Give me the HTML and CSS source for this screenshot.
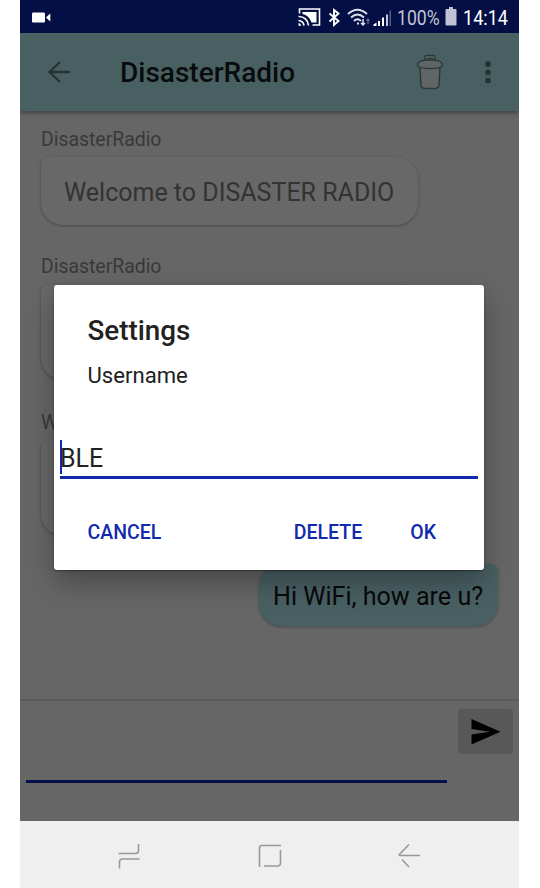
FILE: index.html
```html
<!DOCTYPE html>
<html lang="en">
<head>
<meta charset="utf-8">
<title>DisasterRadio</title>
<link rel="stylesheet" href="styles.css">
</head>
<body>
<div class="phone">
  <div class="status">
    <svg class="camera" width="19" height="12" viewBox="0 0 19 12"><rect y="0.5" width="13" height="10" rx="1.2"/><path d="M14 5.500 15.500 4 18.300 1.500v8L15.500 7z"/></svg>
    <svg class="status-icons" width="98" height="24" viewBox="0 0 98 24">
      <g fill="none" stroke="#fff" stroke-width="1.600"><path d="M1.500 8.500V4h20v16h-7"/><path d="M.5 15.500a6 6 0 0 1 5.500 5M.5 11.500a9.500 9.500 0 0 1 10 9"/></g>
      <path d="M4.500 7h14v10.500h-5Q11 10 4.500 9zM.5 18q2.300.3 2.800 2.800H.5z"/>
      <path d="M31.500 8.500l9 7.500-4.500 4V5l4.500 3.500-9 8" fill="none" stroke="#fff" stroke-width="1.900"/>
      <g fill="none" stroke="#dfe1ea" stroke-width="1.900"><path d="M50 9q9.500-8.500 19 0M53 12.500q6.500-6 13 0M56 16q3.500-3.500 7 0M59 18.500h2"/><path d="M65 14v6m-2-2 2 2 2-2" stroke-width="1.500"/><path d="M70 19v-5m-1.500 2 1.500-2 1.500 2" stroke="#69708f" stroke-width="1.200"/></g>
      <path d="M75.500 19.500l3-2V21h-3z"/><path d="M80 16h2v5h-2zM84 12.500h2V21h-2z"/><path d="M88 9.500h2V21h-2z" fill="#c4c7d6"/><path d="M91.500 5.500H93V21h-1.500z" fill="#555d80"/>
    </svg>
    <span class="percent">100%</span>
    <svg class="battery" width="12" height="20" viewBox="0 0 12 20"><path d="M4 0h4v2h2.500q1 0 1 1v14.500q0 1-1 1h-9q-1 0-1-1V3q0-1 1-1H4z"/></svg>
    <span class="clock">14:14</span>
  </div>
  <header class="toolbar">
    <svg class="back" width="24" height="24" viewBox="0 0 24 24"><path d="M13 2 2.500 12 13 22M2.500 12H23"/></svg>
    <h1>DisasterRadio</h1>
    <svg class="trash" width="26" height="36" viewBox="0 0 26 36"><path d="M8 7V3q0-1.500 1.500-1.500h7Q18 1.500 18 3v4M10.500 6V4.500h5V6"/><path d="M3 13l.8 18Q4 33.700 7 34.200q6 .8 12 0 2.800-.5 3-3L23 13z"/><path d="M1 10q0-4 12-4t12 4v2.500Q22 14.500 13 14.500T1 12.500z"/></svg>
    <svg class="more" width="8" height="26" viewBox="0 0 8 26"><circle cx="4" cy="5" r="2.900"/><circle cx="4" cy="13.300" r="2.900"/><circle cx="4" cy="21.600" r="2.900"/></svg>
  </header>
  <main class="chat">
    <section class="message"><div class="sender">DisasterRadio</div><div class="bubble">Welcome to DISASTER RADIO</div></section>
    <section class="message tall"><div class="sender">DisasterRadio</div><div class="bubble"></div></section>
    <section class="message tall last"><div class="sender">WiFi</div><div class="bubble"></div></section>
    <div class="bubble own">Hi WiFi, how are u?</div>
  </main>
  <footer class="composer">
    <div class="entry"></div>
    <div class="send"><svg width="30" height="26" viewBox="0 0 30 26"><path d="M.5 0 29.500 12.800.5 25.500V15.500L19 12.800.5 10z"/></svg></div>
  </footer>
  <nav class="navbar">
    <svg width="24" height="26" viewBox="0 0 24 26"><path d="M.5 10.500h17q3 0 3-3V1M21.500 16H4.500q-3 0-3 3v6.500"/></svg>
    <svg width="24" height="26" viewBox="0 0 24 26"><path d="M1.500 24V5q0-2.500 2.500-2.500h19M22.500 7v13q0 3-3 3H6"/></svg>
    <svg width="24" height="26" viewBox="0 0 24 26"><path d="M11 1.500 1.500 11.200q-1 1.300.8 1.300H22M4 16.500l7 7.500"/></svg>
  </nav>
  <div class="dialog">
    <h2>Settings</h2>
    <div class="label">Username</div>
    <div class="field"><span class="caret"></span><span class="value">BLE</span></div>
    <div class="actions"><span>CANCEL</span><span class="delete">DELETE</span><span class="ok">OK</span></div>
  </div>
</div>
</body>
</html>
```
FILE: styles.css
```css
* { box-sizing: border-box; }
body { margin: 0; background: #fff; font-family: Roboto, sans-serif; }
h1, h2 { margin: 0; font-weight: 500; }
svg { display: block; flex: none; }
.phone { position: relative; display: flex; flex-direction: column; width: 499px; height: 888px; margin-left: 20px; overflow: hidden; background: #666; }
.status { display: flex; align-items: center; height: 33px; flex: none; padding: 2px 11px 0 0; background: #040f46; color: #fff; fill: #fff; font-size: 20.5px; }
.camera { margin-left: 12px; }
.status-icons { margin-left: auto; margin-right: 1px; margin-bottom: 2px; }
.percent { width: 42px; margin-right: 6px; color: #c2c5d5; white-space: nowrap; transform: scaleX(.86); transform-origin: left; }
.battery { margin-right: 6px; margin-bottom: 2px; fill: #c0c3d3; }
.clock { width: 45px; white-space: nowrap; transform: scaleX(.88); transform-origin: left; }
.toolbar { position: relative; display: flex; align-items: center; height: 78px; flex: none; padding: 0 27px; background: #496063; box-shadow: 0 2px 4px rgba(0,0,0,.35); }
.back { fill: none; stroke: #273234; stroke-width: 2.3; }
.toolbar h1 { margin-left: 49px; font-size: 28px; color: #090c0c; }
.trash { margin-left: auto; fill: #606667; stroke: #2d3839; stroke-width: 1.5; }
.more { margin-left: 41px; fill: #273234; }
.chat { display: flex; flex-direction: column; height: 588px; padding: 17px 21px 0; }
.message { height: 127px; }
.sender { height: 29px; font-size: 19.4px; line-height: 24px; color: #393939; }
.bubble { width: 377px; height: 68px; padding-left: 23px; line-height: 72px; border-radius: 8px 22px 22px 22px; background: #686868; box-shadow: 0 1px 3px rgba(0,0,0,.3); font-size: 25px; color: #333; white-space: nowrap; }
.tall { height: 156px; }
.tall .bubble { height: 96px; }
.last { height: 153px; }
.own { align-self: flex-end; width: 239px; height: 62px; padding-left: 14px; line-height: 66px; border-radius: 22px 8px 22px 22px; background: #496063; color: #070909; font-size: 25.1px; }
.composer { display: flex; justify-content: space-between; height: 122px; padding: 8px 6px 0; border-top: 2px solid #5a5a5a; }
.entry { width: 421px; height: 74px; border-bottom: 3px solid #05104a; }
.send { display: flex; align-items: center; justify-content: center; width: 55px; height: 45px; border-radius: 3px; background: #585858; }
.navbar { display: flex; justify-content: center; gap: 116px; height: 67px; padding-top: 22px; background: #efefef; fill: none; stroke: #999; stroke-width: 1.6; }
.dialog { position: absolute; left: 34px; top: 285px; width: 430px; height: 285px; padding: 29px 6px 0; border-radius: 3px; background: #fff; color: #212121; box-shadow: 0 12px 28px rgba(0,0,0,.3), 0 1px 2px rgba(0,0,0,.4); }
.dialog h2 { padding-left: 27.5px; font-size: 27.8px; line-height: 33px; }
.label { padding-left: 27.5px; margin-top: 13px; font-size: 22.1px; line-height: 30px; }
.field { display: flex; align-items: center; height: 42px; margin-top: 47px; border-bottom: 3px solid #1029ad; font-size: 25px; }
.caret { width: 2px; height: 34px; margin-right: -2px; background: #1029ad; }
.value { padding-top: 3px; }
.actions { display: flex; margin-top: 40px; padding: 0 42px 0 27.5px; font-size: 19.5px; line-height: 28px; font-weight: 500; color: #1029ad; }
.delete { margin-left: auto; }
.ok { margin-left: 48px; }
```
